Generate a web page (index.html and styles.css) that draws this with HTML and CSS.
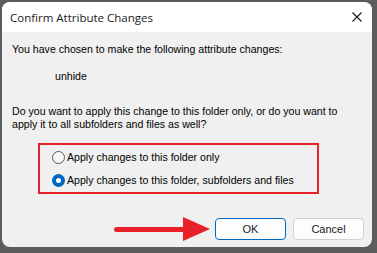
FILE: index.html
```html
<!DOCTYPE html>
<html lang="en">
<head>
    <meta charset="UTF-8">
    <title>Confirm Attribute Changes</title>
    <link rel="stylesheet" href="styles.css">
</head>
<body>
    <div class="dialog">
        <div class="titlebar">
            <span class="title">Confirm Attribute Changes</span>
            <svg class="close" width="10" height="10" viewBox="0 0 10 10">
                <path d="M0.5 0.5 L9.5 9.5 M9.5 0.5 L0.5 9.5" stroke="#1a1a1a" stroke-width="1.1"/>
            </svg>
        </div>
        <div class="content">
            <p class="line">You have chosen to make the following attribute changes:</p>
            <p class="change">unhide</p>
            <p class="question">Do you want to apply this change to this folder only, or do you want to apply it to all subfolders and files as well?</p>
            <div class="options">
                <label class="option">
                    <span class="radio"></span>
                    Apply changes to this folder only
                </label>
                <label class="option">
                    <span class="radio checked"></span>
                    Apply changes to this folder, subfolders and files
                </label>
            </div>
            <div class="buttons">
                <div class="arrow">
                    <span class="shaft"></span>
                    <svg class="head" width="28" height="24" viewBox="0 0 28 24">
                        <path d="M0 0 L27 12 L0 24 Z" fill="#e8202a"/>
                    </svg>
                </div>
                <button class="btn default">OK</button>
                <button class="btn">Cancel</button>
            </div>
        </div>
    </div>
</body>
</html>
```

FILE: styles.css
```css
body {
    margin: 0;
    width: 377px;
    height: 253px;
    background: #5c5c5c;
    overflow: hidden;
}
.dialog {
    margin: 2px 0 0 2px;
    width: 370px;
    height: 245px;
    background: #f0f0f0;
    border-radius: 8px;
    overflow: hidden;
    font-family: "Liberation Sans", Arial, sans-serif;
    font-size: 10.6px;
    color: #000;
}
.titlebar {
    height: 30px;
    background: #fff;
    display: flex;
    align-items: center;
    justify-content: space-between;
    padding: 0 10px 0 8px;
}
.title {
    font-family: "Open Sans", "Liberation Sans", sans-serif;
    font-size: 11.5px;
    color: #1a1a1a;
}
.content {
    padding: 11px 0 0 10px;
}
.content p {
    margin: 0;
}
.line {
    margin-bottom: 15px !important;
}
.change {
    padding-left: 43px;
}
.question {
    margin-top: 23px !important;
    width: 330px;
    line-height: 13px;
}
.options {
    margin: 12px 0 0 26px;
    width: 265px;
    height: 47px;
    border: 2px solid #e8202a;
    display: flex;
    flex-direction: column;
    justify-content: center;
    gap: 10px;
    padding-left: 12px;
}
.option {
    display: flex;
    align-items: center;
    gap: 2px;
}
.radio {
    width: 11px;
    height: 11px;
    border: 1px solid #5a5a5a;
    border-radius: 50%;
    background: #f7f7f7;
}
.radio.checked {
    width: 13px;
    height: 13px;
    border: none;
    background: #0067c0;
    position: relative;
}
.radio.checked::after {
    content: "";
    position: absolute;
    left: 4px;
    top: 4px;
    width: 5px;
    height: 5px;
    border-radius: 50%;
    background: #fff;
}
.buttons {
    display: flex;
    align-items: center;
    margin-top: 23px;
    padding-left: 102px;
}
.arrow {
    display: flex;
    align-items: center;
    margin-right: 4px;
}
.shaft {
    width: 72px;
    height: 5px;
    background: #e8202a;
    border-radius: 3px;
    margin-right: -3px;
}
.btn {
    width: 71px;
    height: 22px;
    border: 1px solid #d0d0d0;
    border-radius: 4px;
    background: #fdfdfd;
    font-family: "Liberation Sans", Arial, sans-serif;
    font-size: 11px;
    color: #1a1a1a;
    margin-right: 7px;
    padding: 0;
}
.btn.default {
    border-color: #0067c0;
}
```
